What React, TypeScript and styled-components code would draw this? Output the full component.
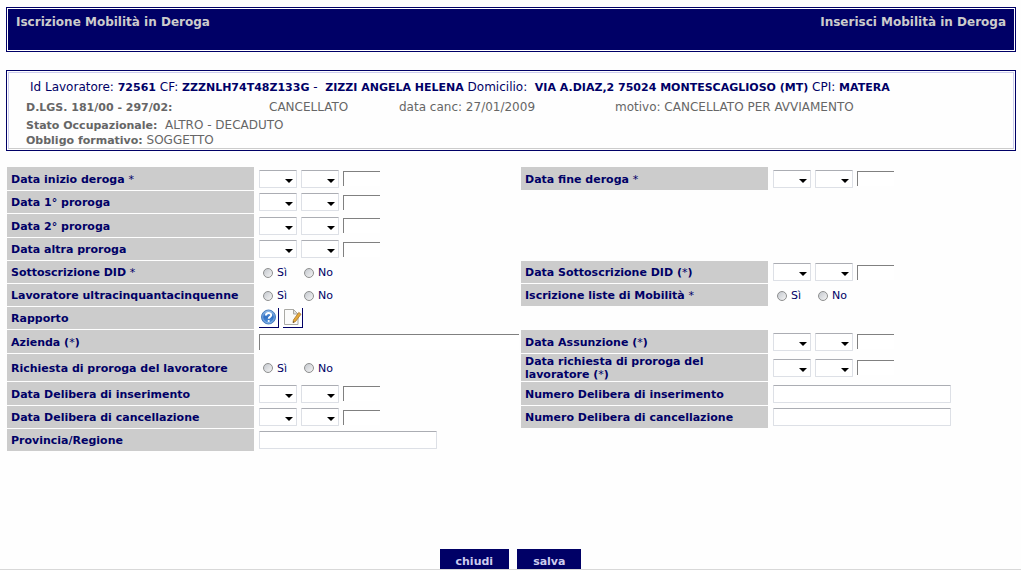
import React from 'react';
import styled, { createGlobalStyle, css } from 'styled-components';

const NAVY = '#000066';
const SILVER = '#cccccc';

const GlobalStyle = createGlobalStyle`
  *, *::before, *::after { box-sizing: border-box; }
  body {
    margin: 0;
    background: #fefefe;
    color: ${NAVY};
    font-family: Verdana, 'DejaVu Sans', sans-serif;
    font-size: 11px;
    line-height: 13px;
  }
  button, input, select { font: inherit; color: inherit; }
`;

const Content = styled.div`
  padding: 7px 5px 0 6px;
`;

const Banner = styled.header`
  display: flex;
  justify-content: space-between;
  min-height: 45px;
  padding: 6px 9px;
  border: 1px solid ${NAVY};
  box-shadow: inset 0 0 0 1px #ffffff;
  background: ${NAVY};
  color: ${SILVER};
`;

const BannerTitle = styled.h1`
  margin: 0;
  font-size: 12px;
  font-weight: bold;
  line-height: 16px;
`;

const WorkerPanel = styled.section`
  margin-top: 18px;
  padding: 1px;
  border: 1px solid ${NAVY};
`;

const WorkerInner = styled.div`
  padding: 6px 0 0 17px;
  border: 1px solid #ccccee;
  border-bottom-color: ${SILVER};
  color: #666666;
  font-size: 12px;
  b {
    font-size: 11px;
    line-height: 13px;
  }
`;

const Identity = styled.p`
  margin: 0 0 4px;
  padding-left: 4px;
  color: ${NAVY};
  line-height: 16px;
  white-space: pre-wrap;
`;

const StatusGrid = styled.div`
  display: grid;
  grid-template-columns: 243fr 130fr 216fr 398fr;
  align-items: baseline;
  line-height: 16px;
`;

const StatusLine = styled.p`
  margin: 0;
  padding-top: 2px;
  line-height: 16px;
  white-space: pre-wrap;
`;

const LastStatusLine = styled(StatusLine)`
  padding-top: 0;
  line-height: 15px;
`;

const Form = styled.form`
  margin-top: 16px;
`;

const Rows = styled.div`
  display: grid;
  row-gap: 1px;
  padding: 0 5px 0 7px;
`;

const Row = styled.div<{ $tall?: boolean }>`
  display: grid;
  grid-template-columns: 247fr 267fr 247fr 248fr;
  min-height: ${({ $tall }) => ($tall ? 23 : 22)}px;
`;

const LabelCell = styled.div`
  display: flex;
  align-items: center;
  padding: 1px 4px 0;
  background: ${SILVER};
  font-weight: bold;
`;

const Mark = styled.span`
  font-weight: normal;
`;

const FieldCell = styled.div`
  display: flex;
  align-items: center;
  gap: 4px;
  padding: 0 2px 0 5px;
`;

const SelectBox = styled.span`
  position: relative;
  display: flex;
  &::after {
    content: '';
    position: absolute;
    right: 4px;
    bottom: 5px;
    border: 4px solid transparent;
    border-top-color: #000000;
    border-bottom-width: 0;
    pointer-events: none;
  }
`;

const softBorder = css`
  border: 1px solid #dde0e6;
  border-top-color: #abadb3;
  border-radius: 1px;
  background: #ffffff;
`;

const insetBorder = css`
  border: 0 solid #808080;
  border-width: 1px 0 0 1px;
  background: #ffffff;
`;

const Select = styled.select`
  appearance: none;
  width: 38px;
  height: 18px;
  padding: 0 12px 0 2px;
  ${softBorder}
`;

const YearInput = styled.input`
  width: 37px;
  height: 15px;
  padding: 0 2px;
  ${insetBorder}
`;

const CompanyInput = styled.input`
  width: 100%;
  height: 16px;
  padding: 0 2px;
  ${insetBorder}
`;

const TextInput = styled.input`
  width: 178px;
  height: 18px;
  padding: 0 2px;
  ${softBorder}
`;

const RadioLabel = styled.label`
  display: flex;
  align-items: center;
  gap: 4px;
  width: 37px;
  margin-left: 4px;
  padding-top: 1px;
  & + & { margin-left: 0; }
`;

const Radio = styled.input`
  appearance: none;
  flex: none;
  width: 10px;
  height: 10px;
  margin: 0;
  border: 1px solid #8e8f8f;
  border-radius: 50%;
  background: linear-gradient(135deg, #c4c8ce, #f4f4f4);
  &:checked { background: radial-gradient(${NAVY} 35%, #f0f0f0 45%); }
`;

const IconButton = styled.button`
  display: flex;
  width: 20px;
  height: 20px;
  padding: 0;
  border: 0 solid ${NAVY};
  border-width: 0 1px 1px 0;
  background: #ffffff;
`;

const Footer = styled.footer`
  display: flex;
  justify-content: center;
  gap: 8px;
  margin-top: 98px;
  border-bottom: 1px solid #d8d8d8;
`;

const ActionButton = styled.button`
  height: 20px;
  padding: 4px 15px 0;
  border: 1px solid ${NAVY};
  background: ${NAVY};
  color: #ccccee;
  font-weight: bold;
  line-height: 15px;
`;

type FieldKind = 'date' | 'radio' | 'text' | 'company' | 'icons';

interface Field {
  id: string;
  label: string;
  mark?: string;
  kind: FieldKind;
}

interface FormRow {
  left: Field;
  right?: Field;
  tall?: boolean;
}

const rows: FormRow[] = [
  {
    tall: true,
    left: { id: 'inizio', label: 'Data inizio deroga ', mark: '*', kind: 'date' },
    right: { id: 'fine', label: 'Data fine deroga ', mark: '*', kind: 'date' },
  },
  { left: { id: 'proroga1', label: 'Data 1° proroga', kind: 'date' } },
  { tall: true, left: { id: 'proroga2', label: 'Data 2° proroga', kind: 'date' } },
  { left: { id: 'altra', label: 'Data altra proroga', kind: 'date' } },
  {
    left: { id: 'did', label: 'Sottoscrizione DID ', mark: '*', kind: 'radio' },
    right: { id: 'dataDid', label: 'Data Sottoscrizione DID (', mark: '*', kind: 'date' },
  },
  {
    left: { id: 'ultra', label: 'Lavoratore ultracinquantacinquenne', kind: 'radio' },
    right: { id: 'liste', label: 'Iscrizione liste di Mobilità ', mark: '*', kind: 'radio' },
  },
  { left: { id: 'rapporto', label: 'Rapporto', kind: 'icons' } },
  {
    tall: true,
    left: { id: 'azienda', label: 'Azienda (', mark: '*', kind: 'company' },
    right: { id: 'assunzione', label: 'Data Assunzione (', mark: '*', kind: 'date' },
  },
  {
    left: { id: 'richiesta', label: 'Richiesta di proroga del lavoratore', kind: 'radio' },
    right: {
      id: 'dataRichiesta',
      label: 'Data richiesta di proroga del lavoratore (',
      mark: '*',
      kind: 'date',
    },
  },
  {
    tall: true,
    left: { id: 'dataIns', label: 'Data Delibera di inserimento', kind: 'date' },
    right: { id: 'numIns', label: 'Numero Delibera di inserimento', kind: 'text' },
  },
  {
    left: { id: 'dataCanc', label: 'Data Delibera di cancellazione', kind: 'date' },
    right: { id: 'numCanc', label: 'Numero Delibera di cancellazione', kind: 'text' },
  },
  { left: { id: 'provincia', label: 'Provincia/Regione', kind: 'text' } },
];

const numbers = (count: number) => Array.from({ length: count }, (_, i) => i + 1);

function NumberSelect({ id, name, count }: { id?: string; name: string; count: number }) {
  return (
    <SelectBox>
      <Select id={id} aria-label={name} defaultValue="">
        <option value="" />
        {numbers(count).map((n) => (
          <option key={n} value={n}>
            {n}
          </option>
        ))}
      </Select>
    </SelectBox>
  );
}

function HelpIcon() {
  return (
    <svg width="19" height="19" viewBox="0 0 19 19" aria-hidden="true">
      <defs>
        <linearGradient id="helpBall" x1="0" y1="0" x2="0" y2="1">
          <stop offset="0" stopColor="#7fb0e6" />
          <stop offset="0.5" stopColor="#2f6fc4" />
          <stop offset="1" stopColor="#5a9ae0" />
        </linearGradient>
      </defs>
      <circle cx="9.5" cy="9" r="7" fill="url(#helpBall)" stroke="#4b7fc0" />
      <circle cx="9.5" cy="9" r="5.8" fill="none" stroke="#a9cbf0" strokeWidth="0.6" />
      <path
        d="M6.9 7.4C6.9 4.3 12.3 4.2 12.2 7.2C12.1 8.9 9.7 8.9 9.7 10.8"
        fill="none"
        stroke="#ffffff"
        strokeWidth="1.9"
      />
      <circle cx="9.7" cy="13" r="1.1" fill="#ffffff" />
    </svg>
  );
}

function EditIcon() {
  return (
    <svg width="19" height="19" viewBox="0 0 19 19" aria-hidden="true">
      <path d="M1.5 1.5H10.5L15 6V16.5H1.5Z" fill="#fbfbfa" stroke="#a9a9a4" />
      <path d="M10.5 1.5V6H15Z" fill="#e2e2de" stroke="#a9a9a4" />
      <path
        d="M15.8 4.4L18 6.2L12.6 13.4L10 14.8L10.4 12Z"
        fill="#e5a93a"
        stroke="#a8762a"
        strokeWidth="0.8"
      />
      <path d="M10 14.8L10.3 13L11.4 14.1Z" fill="#444444" />
    </svg>
  );
}

function Control({ field }: { field: Field }) {
  const name = field.label.replace('(', '').trim();
  switch (field.kind) {
    case 'date':
      return (
        <>
          <NumberSelect id={field.id} name={`${name} giorno`} count={31} />
          <NumberSelect name={`${name} mese`} count={12} />
          <YearInput aria-label={`${name} anno`} maxLength={4} />
        </>
      );
    case 'radio':
      return (
        <>
          <RadioLabel>
            <Radio type="radio" id={field.id} name={field.id} value="si" />
            Sì
          </RadioLabel>
          <RadioLabel>
            <Radio type="radio" name={field.id} value="no" />
            No
          </RadioLabel>
        </>
      );
    case 'icons':
      return (
        <>
          <IconButton type="button" id={field.id} aria-label="Aiuto">
            <HelpIcon />
          </IconButton>
          <IconButton type="button" aria-label="Modifica">
            <EditIcon />
          </IconButton>
        </>
      );
    case 'company':
      return <CompanyInput type="text" id={field.id} />;
    default:
      return <TextInput type="text" id={field.id} />;
  }
}

function FormField({ field }: { field: Field }) {
  return (
    <>
      <LabelCell>
        <label htmlFor={field.id}>
          {field.label}
          {field.mark && <Mark>{field.mark}</Mark>}
          {field.label.endsWith('(') && ')'}
        </label>
      </LabelCell>
      <FieldCell>
        <Control field={field} />
      </FieldCell>
    </>
  );
}

export default function App() {
  return (
    <>
      <GlobalStyle />
      <Content>
        <Banner>
          <BannerTitle>Iscrizione Mobilità in Deroga</BannerTitle>
          <BannerTitle as="h2">Inserisci Mobilità in Deroga</BannerTitle>
        </Banner>
        <WorkerPanel>
          <WorkerInner>
            <Identity>
              Id Lavoratore: <b>72561</b> CF: <b>ZZZNLH74T48Z133G</b> -{'  '}
              <b>ZIZZI ANGELA HELENA</b> Domicilio:{'  '}
              <b>VIA A.DIAZ,2 75024 MONTESCAGLIOSO (MT)</b> CPI: <b>MATERA</b>
            </Identity>
            <StatusGrid>
              <b>D.LGS. 181/00 - 297/02:</b>
              <span>CANCELLATO</span>
              <span>data canc: 27/01/2009</span>
              <span>motivo: CANCELLATO PER AVVIAMENTO</span>
            </StatusGrid>
            <StatusLine>
              <b>Stato Occupazionale:</b>
              {'  '}ALTRO - DECADUTO
            </StatusLine>
            <LastStatusLine>
              <b>Obbligo formativo:</b> SOGGETTO
            </LastStatusLine>
          </WorkerInner>
        </WorkerPanel>
      </Content>
      <Form>
        <Rows>
          {rows.map((row) => (
            <Row key={row.left.id} $tall={row.tall}>
              <FormField field={row.left} />
              {row.right && <FormField field={row.right} />}
            </Row>
          ))}
        </Rows>
        <Footer>
          <ActionButton type="button">chiudi</ActionButton>
          <ActionButton type="submit">salva</ActionButton>
        </Footer>
      </Form>
    </>
  );
}
